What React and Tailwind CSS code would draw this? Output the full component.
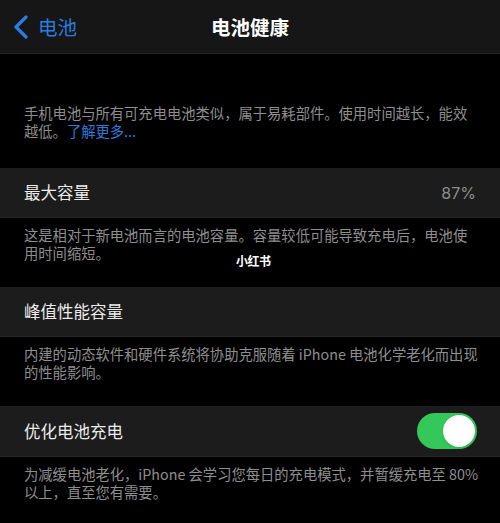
export default function App() {
  const font = { fontFamily: '"Noto Sans CJK SC", "Noto Sans", sans-serif' };
  return (
    <div className="w-[500px] h-[523px] bg-black overflow-hidden" style={font}>
      {/* Nav */}
      <div className="relative h-[54px] bg-[#161616] border-b border-[#222] flex items-center">
        <div className="flex items-center pl-[13px] gap-[9px] text-[#2a7de1]">
          <svg width="16" height="24" viewBox="0 0 16 24" fill="none">
            <path d="M13 2 L3 12 L13 22" stroke="#2a7de1" strokeWidth="3.2" strokeLinecap="round" strokeLinejoin="round" />
          </svg>
          <span className="text-[19.5px] leading-none">电池</span>
        </div>
        <div className="absolute inset-0 flex items-center justify-center text-white text-[19.5px] font-semibold leading-none">
          电池健康
        </div>
      </div>

      {/* Intro */}
      <div className="h-[114px] pt-[50px] px-6 text-[#8e8e8e] text-[14.3px] leading-[18px] whitespace-nowrap">
        手机电池与所有可充电电池类似，属于易耗部件。使用时间越长，能效
        <br />
        越低。<span className="text-[#3179d6]">了解更多...</span>
      </div>

      {/* Row 1 */}
      <div className="h-[50px] bg-[#1c1c1c] border-b border-[#262626] flex items-center justify-between px-6">
        <span className="text-[#ececec] text-[16.5px]">最大容量</span>
        <span className="text-[#8c8c8c] text-[16px]" style={{ fontFamily: '"Inter", "Noto Sans", sans-serif' }}>87%</span>
      </div>
      <div className="relative h-[69px] pt-[8px] px-6 text-[#8e8e8e] text-[14.3px] leading-[18px] whitespace-nowrap">
        这是相对于新电池而言的电池容量。容量较低可能导致充电后，电池使
        <br />
        用时间缩短。
        <div className="absolute left-[236px] top-[37px] text-white text-[12px] font-bold leading-none tracking-[-0.5px]">小红书</div>
      </div>

      {/* Row 2 */}
      <div className="h-[50px] bg-[#1c1c1c] border-b border-[#262626] flex items-center px-6">
        <span className="text-[#ececec] text-[16.5px]">峰值性能容量</span>
      </div>
      <div className="h-[69px] pt-[8px] px-6 text-[#8e8e8e] text-[14.3px] leading-[18px] whitespace-nowrap">
        内建的动态软件和硬件系统将协助克服随着 iPhone 电池化学老化而出现
        <br />
        的性能影响。
      </div>

      {/* Row 3 */}
      <div className="h-[51px] bg-[#1c1c1c] border-b border-[#262626] flex items-center justify-between pl-6 pr-[23px]">
        <span className="text-[#ececec] text-[16.5px]">优化电池充电</span>
        <div className="w-[60px] h-[36px] rounded-full bg-[#34c759] flex items-center justify-end pr-[2px]">
          <div className="w-[32px] h-[32px] rounded-full bg-white shadow" />
        </div>
      </div>
      <div className="pt-[8px] px-6 text-[#8e8e8e] text-[14.3px] leading-[18px] whitespace-nowrap">
        为减缓电池老化，iPhone 会学习您每日的充电模式，并暂缓充电至 80%
        <br />
        以上，直至您有需要。
      </div>
    </div>
  );
}
